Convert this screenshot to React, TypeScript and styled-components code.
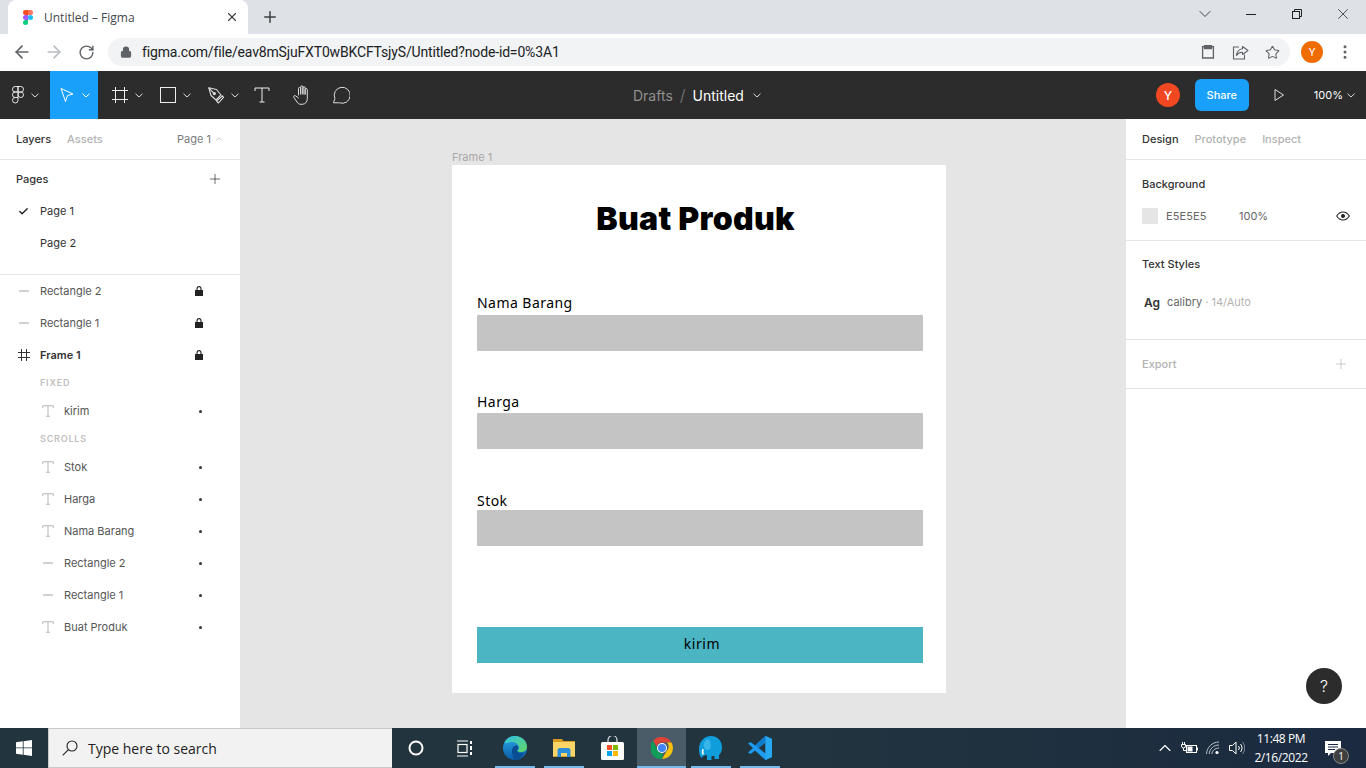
import React from "react";
import styled, {createGlobalStyle} from "styled-components";
import {ArrowLeft, ArrowRight, Check, ChevronDown, ChevronUp, Lock, MoreVertical, Plus, RotateCw, Star, X} from "lucide-react";

const GlobalStyle = createGlobalStyle`
  html, body {
    margin: 0;
    padding: 0;
    overflow: hidden;
    background: #fff;
  }
  * {
    box-sizing: border-box;
  }
`

const Screen = styled.div`
  width: 1366px;
  height: 768px;
  display: flex;
  flex-direction: column;
  overflow: hidden;
  font-family: Inter, sans-serif;
`

/* browser chrome */
const TabStrip = styled.div`
  height: 34px;
  flex: none;
  background: #dee1e6;
  display: flex;
  align-items: center;
  padding-left: 8px;
`

const Tab = styled.div`
  width: 240px;
  height: 34px;
  background: #fff;
  border-radius: 8px 8px 0 0;
  display: flex;
  align-items: center;
  padding: 0 9px 0 15px;
  font: 12px "Open Sans", sans-serif;
  color: #45494e;
`

const TabTitle = styled.span`
  flex: 1;
  margin-left: 11px;
`

const NewTab = styled.div`
  margin-left: 13px;
  display: flex;
  color: #3c4043;
`

const WindowControls = styled.div`
  margin-left: auto;
  display: flex;
  color: #202124;
`

const WindowButton = styled.div`
  width: 46px;
  height: 28px;
  margin-bottom: 6px;
  display: flex;
  align-items: center;
  justify-content: center;
`

const AddressRow = styled.div`
  height: 37px;
  flex: none;
  background: #fff;
  display: flex;
  align-items: center;
  padding: 0 0 1px 6px;
  color: #5f6368;
`

const NavButton = styled.div<{$dim?: boolean}>`
  width: 32px;
  height: 28px;
  display: flex;
  align-items: center;
  justify-content: center;
  color: ${p => p.$dim ? "#b9bcc0" : "#5f6368"};
`

const Omnibox = styled.div`
  width: 1182px;
  height: 28px;
  margin-left: 6px;
  border-radius: 14px;
  background: #f1f3f4;
  display: flex;
  align-items: center;
  padding: 0 2px 0 12px;
`

const Url = styled.span`
  margin-left: 10px;
  flex: 1;
  font: 14px Roboto, sans-serif;
  letter-spacing: -.16px;
  color: #202124;
`

const OmniIcon = styled.div`
  width: 32px;
  display: flex;
  justify-content: center;
`

const ChromeAvatar = styled.div`
  width: 22px;
  height: 22px;
  margin-left: 11px;
  border-radius: 50%;
  background: #ef6c00;
  color: #fff;
  font: 11px Roboto, sans-serif;
  display: flex;
  align-items: center;
  justify-content: center;
`

const Kebab = styled.div`
  margin-left: 13px;
  display: flex;
  color: #5f6368;
`

/* figma toolbar */
const ToolBar = styled.div`
  height: 48px;
  flex: none;
  background: #2c2c2c;
  display: flex;
  align-items: center;
  color: #fff;
`

const Tools = styled.div`
  flex: 0 0 633px;
  height: 48px;
  display: flex;
  align-items: center;
`

const Tool = styled.div<{$active?: boolean; $width: number; $inset?: number}>`
  width: ${p => p.$width}px;
  height: 48px;
  flex: none;
  padding-left: ${p => p.$inset ?? 0}px;
  display: flex;
  align-items: center;
  justify-content: center;
  gap: 7px;
  background: ${p => p.$active ? "#18a0fb" : "transparent"};
`

const Breadcrumb = styled.div`
  display: flex;
  align-items: center;
  font-size: 14px;
  color: #fff;
`

const Drafts = styled.span`
  color: #8f8f8f;
`

const Slash = styled.span`
  margin: 0 7px;
  color: #6a6a6a;
  font-size: 16px;
`

const ToolRight = styled.div`
  margin-left: auto;
  display: flex;
  align-items: center;
  height: 48px;
`

const UserDot = styled.div`
  width: 24px;
  height: 24px;
  border-radius: 50%;
  background: #f24822;
  display: flex;
  align-items: center;
  justify-content: center;
  font-size: 12px;
  font-weight: 500;
`

const ShareButton = styled.div`
  width: 54px;
  height: 32px;
  margin-left: 15px;
  border-radius: 6px;
  background: #18a0fb;
  display: flex;
  align-items: center;
  justify-content: center;
  font-size: 11px;
  font-weight: 500;
`

const PlayIcon = styled.div`
  margin-left: 22px;
  display: flex;
`

const Zoom = styled.div`
  margin: 0 11px 0 27px;
  display: flex;
  align-items: center;
  gap: 4px;
  font-size: 11px;
`

/* panels */
const Workspace = styled.div`
  flex: 1;
  min-height: 0;
  display: flex;
  position: relative;
`

const Panel = styled.aside`
  width: 240px;
  flex: none;
  background: #fff;
  font-size: 11px;
  color: #333;
`

const PanelTabs = styled.div`
  height: 41px;
  padding: 0 16px 1px;
  border-bottom: 1px solid #e5e5e5;
  display: flex;
  align-items: center;
  gap: 16px;
`

const PanelTab = styled.span<{$active?: boolean}>`
  font-weight: 500;
  color: ${p => p.$active ? "#333" : "#b3b3b3"};
`

const PageSwitch = styled.span`
  margin-left: auto;
  display: flex;
  align-items: center;
  gap: 3px;
  color: #7b7b7b;
`

const PagesBlock = styled.div`
  padding-bottom: 15px;
  border-bottom: 1px solid #e5e5e5;
`

const PagesHead = styled.div`
  height: 35px;
  padding: 3px 17px 0 16px;
  display: flex;
  align-items: center;
  justify-content: space-between;
  font-weight: 500;
`

const PageRow = styled.div`
  height: 32px;
  padding-left: 18px;
  display: flex;
  align-items: center;
`

const PageCheck = styled.div`
  width: 22px;
  display: flex;
`

const LayerRow = styled.div<{$nested?: boolean; $strong?: boolean}>`
  height: 32px;
  display: flex;
  align-items: center;
  padding-left: ${p => p.$nested ? 40 : 16}px;
  font-weight: ${p => p.$strong ? 600 : 400};
  color: ${p => p.$strong ? "#333" : "#555"};
`

const LayerIcon = styled.div`
  width: 16px;
  height: 16px;
  margin-right: 8px;
  flex: none;
  display: flex;
  align-items: center;
  justify-content: center;
`

const LayerName = styled.span`
  flex: 1;
`

const LayerTail = styled.div`
  width: 10px;
  margin-right: 36px;
  display: flex;
  justify-content: center;
`

const Dot = styled.i`
  width: 3px;
  height: 3px;
  margin-left: 2px;
  border-radius: 50%;
  background: #333;
`

const ScrollLabel = styled.div`
  height: 24px;
  padding: 0 0 2px 40px;
  display: flex;
  align-items: center;
  font-size: 9px;
  font-weight: 600;
  letter-spacing: .8px;
  color: #c0c0c0;
`

const PropSection = styled.section<{$height: number}>`
  height: ${p => p.$height}px;
  border-bottom: 1px solid #e5e5e5;
  padding: 0 16px;
`

const PropTitle = styled.div<{$muted?: boolean; $height: number}>`
  height: ${p => p.$height}px;
  display: flex;
  align-items: center;
  justify-content: space-between;
  font-weight: 500;
  color: ${p => p.$muted ? "#b3b3b3" : "#333"};
`

const FillRow = styled.div`
  display: flex;
  align-items: center;
  height: 16px;
  color: #666;
`

const Swatch = styled.div`
  width: 16px;
  height: 16px;
  background: #e5e5e5;
`

const HexValue = styled.span`
  margin-left: 8px;
  width: 73px;
  letter-spacing: .1px;
`

const Opacity = styled.span`
  flex: 1;
`

const StyleRow = styled.div`
  display: flex;
  align-items: center;
  height: 20px;
  margin-top: 5px;
`

const Ag = styled.span`
  width: 25px;
  padding-left: 2px;
  font-size: 12px;
  font-weight: 600;
  color: #333;
`

const StyleName = styled.span`
  color: #666;
`

const StyleMeta = styled.span`
  color: #b3b3b3;
`

const ExportPlus = styled.span`
  margin-right: 1px;
  display: flex;
`

/* canvas */
const Canvas = styled.main`
  flex: 1;
  position: relative;
  background: #e5e5e5;
`

const FrameLabel = styled.div`
  position: absolute;
  left: 212px;
  top: 31px;
  font-size: 11px;
  color: #a8a8a8;
`

const Frame = styled.div`
  position: absolute;
  left: 212px;
  top: 46px;
  width: 494px;
  height: 528px;
  background: #fff;
  padding: 34px 23px 0 25px;
`

const Heading = styled.h1`
  margin: 0 0 0 -9px;
  height: 40px;
  text-align: center;
  font: 900 32px/40px Inter, sans-serif;
  letter-spacing: .3px;
  color: #000;
`

const Field = styled.div<{$top: number}>`
  margin-top: ${p => p.$top}px;
`

const FieldLabel = styled.div<{$gap: number}>`
  height: 14px;
  margin-bottom: ${p => p.$gap}px;
  font: 14px/14px "Noto Sans", sans-serif;
  letter-spacing: .45px;
  color: #000;
`

const InputBar = styled.div`
  height: 36px;
  background: #c4c4c4;
`

const SendButton = styled.div`
  margin-top: 81px;
  height: 36px;
  padding: 0 0 3px 4px;
  background: #4bb5c3;
  display: flex;
  align-items: center;
  justify-content: center;
  font: 14px "Noto Sans", sans-serif;
  letter-spacing: .55px;
  color: #000;
`

const HelpButton = styled.div`
  position: absolute;
  right: 24px;
  bottom: 24px;
  width: 36px;
  height: 36px;
  border-radius: 50%;
  background: #2c2c2c;
  color: #fff;
  display: flex;
  align-items: center;
  justify-content: center;
  font-size: 16px;
  font-weight: 300;
`

/* windows taskbar */
const TaskBar = styled.footer`
  height: 40px;
  flex: none;
  background: linear-gradient(90deg, #22353f 0%, #22353f 55%, #1b2a40 100%);
  display: flex;
  align-items: center;
  color: #fff;
`

const StartButton = styled.div`
  width: 48px;
  display: flex;
  justify-content: center;
`

const SearchBox = styled.div`
  width: 344px;
  height: 40px;
  background: #f2f2f2;
  border: 1px solid #c9c9c9;
  border-width: 1px 0 1px 1px;
  display: flex;
  align-items: center;
  padding-left: 13px;
  font: 14px "Open Sans", sans-serif;
  color: #222;
`

const SearchText = styled.span`
  margin-left: 10px;
`

const TaskSlot = styled.div<{$open?: boolean; $current?: boolean; $width?: number}>`
  width: ${p => p.$width ?? 49}px;
  height: 40px;
  display: flex;
  align-items: center;
  justify-content: center;
  background: ${p => p.$current ? "#4a5c68" : "transparent"};
  box-shadow: ${p => p.$open && p.$current ? "inset 0 -2px 0 #76b9ed" : "none"};
  ${p => p.$open && !p.$current ? `
    background: linear-gradient(#76b9ed, #76b9ed) center bottom / 40px 2px no-repeat;
  ` : ""}
`

const Tray = styled.div`
  margin-left: auto;
  display: flex;
  align-items: center;
`

const TrayIcon = styled.div<{$width: number}>`
  width: ${p => p.$width}px;
  display: flex;
  justify-content: center;
`

const Clock = styled.div`
  width: 64px;
  text-align: center;
  white-space: nowrap;
  font: 12px/19px "Open Sans", sans-serif;
  letter-spacing: -.4px;
  color: #fff;
`

const Notify = styled.div`
  width: 41px;
  margin-left: 12px;
  position: relative;
  display: flex;
`

const NotifyBadge = styled.span`
  position: absolute;
  left: 8px;
  top: 7px;
  width: 16px;
  height: 16px;
  border-radius: 50%;
  background: #3f3f3f;
  border: 1px solid #8a8a8a;
  display: flex;
  align-items: center;
  justify-content: center;
  font: 10px "Open Sans", sans-serif;
  color: #fff;
`

const FigmaFavicon = () => (
  <svg width="10" height="15" viewBox="0 0 10 15">
    <path d="M5 0H2.5a2.5 2.5 0 0 0 0 5H5z" fill="#f24e1e"/>
    <path d="M5 0h2.5a2.5 2.5 0 0 1 0 5H5z" fill="#ff7262"/>
    <path d="M5 5H2.5a2.5 2.5 0 0 0 0 5H5z" fill="#a259ff"/>
    <circle cx="7.5" cy="7.5" r="2.5" fill="#1abcfe"/>
    <path d="M5 10H2.5A2.5 2.5 0 1 0 5 12.5z" fill="#0acf83"/>
  </svg>
)

const FigmaMark = () => (
  <svg width="12" height="18" viewBox="0 0 12 18" fill="none" stroke="#e6e6e6" strokeWidth="1">
    <path d="M6 .5H3.2a2.75 2.75 0 0 0 0 5.5H6zM6 .5h2.8a2.75 2.75 0 0 1 0 5.5H6zM6 6H3.2a2.75 2.75 0 0 0 0 5.5H6z"/>
    <circle cx="8.75" cy="8.75" r="2.75"/>
    <path d="M6 11.5H3.2A2.75 2.75 0 1 0 6 14.25z"/>
  </svg>
)

const Caret = ({color = "#d9d9d9"}: {color?: string}) => (
  <svg width="8" height="5" viewBox="0 0 8 5" fill="none" stroke={color} strokeWidth="1">
    <path d="M.5.7 4 4 7.5.7"/>
  </svg>
)

const MoveIcon = () => (
  <svg width="16" height="16" viewBox="0 0 16 16" fill="none" stroke="#fff" strokeWidth="1">
    <path d="M2 1.5 14 7 8.5 8.5 6.5 14.5z" strokeLinejoin="round"/>
  </svg>
)

const FrameIcon = () => (
  <svg width="16" height="16" viewBox="0 0 16 16" fill="none" stroke="#eee" strokeWidth="1">
    <path d="M3.5 0v16M12.5 0v16M0 3.500h16M0 12.500h16"/>
  </svg>
)

const RectIcon = () => (
  <svg width="16" height="16" viewBox="0 0 16 16" fill="none" stroke="#eee" strokeWidth="1">
    <rect x=".5" y=".5" width="15" height="15"/>
  </svg>
)

const PenIcon = () => (
  <svg width="16" height="17" viewBox="0 0 16 17" fill="none" stroke="#ddd" strokeWidth="1.1" strokeLinejoin="round">
    <path d="M.8.8 8.500 2.500 13 8 8 13 3 8.500z"/>
    <circle cx="6.300" cy="6.600" r="1.100" fill="#ddd"/>
    <path d="M.8.8 5.500 5.800M8.500 14 14.500 8.800l1 1.500L10.500 16z"/>
  </svg>
)

const TextToolIcon = ({size = 16, color = "#eee"}: {size?: number; color?: string}) => (
  <svg width={size} height={size} viewBox="0 0 16 16" fill="none" stroke={color} strokeWidth={size < 16 ? 1.1 : 1}>
    <path d="M1 4V1h14v3M8 1v14M5.5 15h5"/>
  </svg>
)

const HandIcon = () => (
  <svg width="18" height="20" viewBox="0 0 18 20" fill="none" stroke="#ddd" strokeWidth="1" strokeLinejoin="round" strokeLinecap="round">
    <path d="M5.500 10V3.600a1.100 1.100 0 0 1 2.200 0V9M7.700 9V2a1.100 1.100 0 0 1 2.200 0V9M9.900 9V2.800a1.100 1.100 0 0 1 2.200 0V9.200M12.100 9.200V4.600a1.100 1.100 0 0 1 2.200 0v9c0 3.300-2 5.700-5 5.700H8c-2 0-3-.8-4-2.300L.8 12.300c-.8-1.100.8-2.400 1.900-1.400L5.500 13"/>
  </svg>
)

const CommentIcon = () => (
  <svg width="18" height="18" viewBox="0 0 18 18" fill="none" stroke="#ddd" strokeWidth="1">
    <path d="M1.500 16.800h6A8 8 0 1 0 2.900 12.500z" strokeLinejoin="round"/>
  </svg>
)

const ClipboardIcon = () => (
  <svg width="14" height="14" viewBox="0 0 14 14" fill="none" stroke="#5f6368" strokeWidth="1.300">
    <path d="M3.500 1.700H1.600v11.300h10.800V1.700h-1.900"/>
    <path d="M3.500 .7h7v2.800h-7z" fill="#5f6368"/>
  </svg>
)

const ShareArrow = () => (
  <svg width="17" height="15" viewBox="0 0 17 15" fill="none" stroke="#5f6368" strokeWidth="1.100">
    <path d="M7 2H1.500v12h11V9.500"/>
    <path d="M10.500 1.500 16 5.500 10.500 9.500V7.300C8 7.200 6 8.300 4.500 10.500 5 6.800 7.300 4.200 10.500 3.800z" strokeLinejoin="round"/>
  </svg>
)

const RestoreIcon = () => (
  <svg width="10" height="10" viewBox="0 0 10 10" fill="none" stroke="#202124" strokeWidth="1">
    <rect x=".5" y="2.500" width="7" height="7"/>
    <path d="M2.500 2.500V.5h7v7H7.500"/>
  </svg>
)

const EyeIcon = () => (
  <svg width="14" height="10" viewBox="0 0 14 10" fill="none" stroke="#222" strokeWidth="1.100">
    <path d="M.7 5C2.300 2.300 4.400 1 7 1s4.700 1.300 6.300 4C11.700 7.700 9.600 9 7 9S2.300 7.700.7 5z"/>
    <circle cx="7" cy="5" r="2" fill="#222" stroke="none"/>
  </svg>
)

const LineIcon = () => (
  <svg width="10" height="2" viewBox="0 0 10 2">
    <rect width="10" height="1.200" y=".4" fill="#b3b3b3"/>
  </svg>
)

const HashIcon = () => (
  <svg width="12" height="12" viewBox="0 0 12 12" fill="none" stroke="#333" strokeWidth="1">
    <path d="M3.500 0v12M8.500 0v12M0 3.500h12M0 8.500h12"/>
  </svg>
)

const MiniLock = () => (
  <svg width="8" height="10" viewBox="0 0 8 10">
    <path d="M1.500 4V2.600a2.500 2.500 0 0 1 5 0V4H8v6H0V4zM2.600 4h2.800V2.600a1.400 1.400 0 0 0-2.800 0z" fill="#222"/>
  </svg>
)

const WindowsLogo = () => (
  <svg width="16" height="16" viewBox="0 0 16 16" fill="#fff">
    <path d="M0 2.300 6.800 1.300v6.200H0zM7.600 1.200 16 0v7.500H7.600zM0 8.300h6.800v6.400L0 13.700zM7.600 8.300H16V16l-8.400-1.200z"/>
  </svg>
)

const SearchGlass = () => (
  <svg width="16" height="16" viewBox="0 0 16 16" fill="none" stroke="#222" strokeWidth="1.100">
    <circle cx="10" cy="6" r="5"/>
    <path d="M6.400 9.600.7 15.300"/>
  </svg>
)

const TaskViewIcon = () => (
  <svg width="16" height="17" viewBox="0 0 16 17" fill="none" stroke="#fff" strokeWidth="1.200">
    <path d="M0 1h11M0 16h11"/>
    <rect x="1" y="4.500" width="9" height="8"/>
    <path d="M14 1v3M14 6v4M14 12v3" strokeWidth="2"/>
  </svg>
)

const EdgeIcon = () => (
  <svg width="24" height="24" viewBox="0 0 24 24">
    <defs>
      <linearGradient id="edgeBody" x1="0" y1="0" x2="0" y2="1">
        <stop offset="0" stopColor="#2aa9e6"/>
        <stop offset="1" stopColor="#0b5aa8"/>
      </linearGradient>
      <linearGradient id="edgeTop" x1="0" y1="0" x2="1" y2="1">
        <stop offset="0" stopColor="#2fc3e8"/>
        <stop offset="1" stopColor="#63d85f"/>
      </linearGradient>
    </defs>
    <circle cx="12" cy="12" r="12" fill="url(#edgeBody)"/>
    <path d="M1.500 6.500C3.500 2.500 7.500 0 12 0c7 0 12 5 12 11 0 3.500-3 5-6 5-2 0-3.500-.7-4-1.500 1.500-.5 2.500-1.800 2-3.500C15 7 10.500 5 6 6.500 4.300 7 2.800 8 1.500 6.500z" fill="url(#edgeTop)"/>
    <path d="M9 15c0-4 3-6.500 5.500-5.200 1.200 1 .7 3.700-.5 4.700.5 2.500 4 3.800 7.500 1.800-2 4-5 7.700-9 7.700-2.500-2-3.500-5.500-3.500-9z" fill="#0a4d92"/>
  </svg>
)

const ExplorerIcon = () => (
  <svg width="22" height="18" viewBox="0 0 22 18">
    <path d="M0 0h9l1.500 2H22v4H0z" fill="#d99a22"/>
    <rect y="3" width="22" height="15" fill="#fbd666"/>
    <rect y="17" width="22" height="1" fill="#c9a13a"/>
    <path d="M4.500 18v-7.500L6 9h10l1.500 1.500V18H14v-4H8v4z" fill="#2a8fd8"/>
  </svg>
)

const StoreIcon = () => (
  <svg width="23" height="24" viewBox="0 0 23 24">
    <path d="M7 7V4a4.500 4.500 0 0 1 9 0v3" fill="none" stroke="#dfe3e6" strokeWidth="1.200"/>
    <rect y="6" width="23" height="18" rx="1.500" fill="#fff"/>
    <rect x="6" y="9" width="5" height="5" fill="#f25022"/>
    <rect x="12" y="9" width="5" height="5" fill="#7fba00"/>
    <rect x="6" y="15" width="5" height="5" fill="#00a4ef"/>
    <rect x="12" y="15" width="5" height="5" fill="#ffb900"/>
  </svg>
)

const ChromeIcon = () => (
  <svg width="22" height="22" viewBox="0 0 22 22">
    <path d="M11 0a11 11 0 0 1 9.500 5.500H11a5.500 5.500 0 0 0-5.300 4L2 3.800A11 11 0 0 1 11 0z" fill="#db4437"/>
    <path d="M20.500 5.500A11 11 0 0 1 11 22l4.800-8.200a5.500 5.500 0 0 0 0-8.300z" fill="#f4c20d"/>
    <path d="M11 22A11 11 0 0 1 2 3.800L6.500 13a5.500 5.500 0 0 0 5.700 3.400z" fill="#0f9d58"/>
    <circle cx="11" cy="11" r="5" fill="#fff"/>
    <circle cx="11" cy="11" r="4" fill="#4285f4"/>
  </svg>
)

const ElephantIcon = () => (
  <svg width="23" height="24" viewBox="0 0 23 24">
    <path d="M12 0c6 0 11 4.500 11 11 0 4-1 6-3 8v4h-4.500v-3h-3v4H8v-5C5 19 4 20 2.500 22 .8 20.500 0 17 0 13 0 6 5 0 12 0z" fill="#0f9ddc"/>
    <path d="M9 3c-3 1-5 4-4 8 1 3 4 4 6 2 1.500-3 1-8-2-10z" fill="#38b6ea"/>
    <path d="M3.500 13c-1 2-1 4 0 6l1.500-1c-.8-1.500-.8-3 0-4.500z" fill="#fff"/>
  </svg>
)

const VsCodeIcon = () => (
  <svg width="24" height="24" viewBox="0 0 24 24">
    <path d="M17.500 0 24 3v18l-6.500 3L7 14.500 2.500 18 0 16.500 5 12 0 7.500 2.500 6 7 9.500z" fill="#1f9cf0"/>
    <path d="M17.500 6.500 10.500 12l7 5.500z" fill="#22353f"/>
    <path d="M17.500 0 24 3v18l-6.500 3z" fill="#27a9f2"/>
    <path d="M17.500 0v6.500L10.500 12 7 9.500z" fill="#0f7ccb"/>
  </svg>
)

const BatteryIcon = () => (
  <svg width="17" height="12" viewBox="0 0 17 12" fill="none" stroke="#fff" strokeWidth="1">
    <rect x="5.500" y="3.500" width="10" height="7"/>
    <rect x="6.500" y="4.500" width="5" height="5" fill="#fff" stroke="none"/>
    <rect x="15.500" y="5.500" width="1.500" height="3" fill="#fff" stroke="none"/>
    <path d="M1.500 0v2M3.500 0v2M.5 2.500h4v1.500a2 2 0 0 1-4 0zM2.500 6v2.500h3"/>
  </svg>
)

const WifiIcon = () => (
  <svg width="14" height="14" viewBox="0 0 14 14" fill="none" stroke="#c8d0d6" strokeWidth=".9">
    <path d="M.5 13C.8 6.500 6 1 13 1M3.200 13C3.500 8 7.500 4 13 4M5.800 13c.3-3 3-6 7.200-6"/>
    <circle cx="11" cy="11.500" r="1.600" fill="#fff" stroke="none"/>
  </svg>
)

const VolumeIcon = () => (
  <svg width="16" height="14" viewBox="0 0 16 14" fill="none" stroke="#fff" strokeWidth="1">
    <path d="M.5 4.500h3L7 1v12L3.500 9.500h-3zM9.500 5a3 3 0 0 1 0 4M11.500 3a6 6 0 0 1 0 8"/>
    <path d="M13.500 1a9 9 0 0 1 0 12" stroke="#7d8a95"/>
  </svg>
)

const NotifyIcon = () => (
  <svg width="16" height="15" viewBox="0 0 16 15">
    <path d="M0 0h16v12H6l-3 3v-3H0z" fill="#fff"/>
    <path d="M3 3.500h10M3 6h10M3 8.500h7" stroke="#1b2a40" strokeWidth="1"/>
  </svg>
)

const pageRows = ["Page 1", "Page 2"];

const scrollLayers: {name: string; kind: "text" | "line"}[] = [
  {name: "Stok", kind: "text"},
  {name: "Harga", kind: "text"},
  {name: "Nama Barang", kind: "text"},
  {name: "Rectangle 2", kind: "line"},
  {name: "Rectangle 1", kind: "line"},
  {name: "Buat Produk", kind: "text"},
];

function NestedLayer({name, kind}: {name: string; kind: "text" | "line"}) {
  return (
    <LayerRow $nested>
      <LayerIcon>
        {kind === "text" ? <TextToolIcon size={12} color="#a8a8a8"/> : <LineIcon/>}
      </LayerIcon>
      <LayerName>{name}</LayerName>
      <LayerTail><Dot/></LayerTail>
    </LayerRow>
  );
}

function App() {
  return (
    <Screen>
      <GlobalStyle/>
      <TabStrip>
        <Tab>
          <FigmaFavicon/>
          <TabTitle>Untitled – Figma</TabTitle>
          <X size={14} strokeWidth={2} color="#3c4043"/>
        </Tab>
        <NewTab><Plus size={18} strokeWidth={2}/></NewTab>
        <WindowControls>
          <WindowButton><ChevronDown size={20} strokeWidth={1}/></WindowButton>
          <WindowButton><svg width="10" height="1"><rect width="10" height="1" fill="#202124"/></svg></WindowButton>
          <WindowButton><RestoreIcon/></WindowButton>
          <WindowButton><X size={18} strokeWidth={1}/></WindowButton>
        </WindowControls>
      </TabStrip>

      <AddressRow>
        <NavButton><ArrowLeft size={20} strokeWidth={2}/></NavButton>
        <NavButton $dim><ArrowRight size={20} strokeWidth={2}/></NavButton>
        <NavButton><RotateCw size={17} strokeWidth={2}/></NavButton>
        <Omnibox>
          <Lock size={12} strokeWidth={2.5} fill="#5f6368"/>
          <Url>figma.com/file/eav8mSjuFXT0wBKCFTsjyS/Untitled?node-id=0%3A1</Url>
          <OmniIcon><ClipboardIcon/></OmniIcon>
          <OmniIcon><ShareArrow/></OmniIcon>
          <OmniIcon><Star size={15} strokeWidth={1.7}/></OmniIcon>
        </Omnibox>
        <ChromeAvatar>Y</ChromeAvatar>
        <Kebab><MoreVertical size={18} strokeWidth={2}/></Kebab>
      </AddressRow>

      <ToolBar>
        <Tools>
          <Tool $width={50}><FigmaMark/><Caret/></Tool>
          <Tool $active $width={48}><MoveIcon/><Caret color="#fff"/></Tool>
          <Tool $width={53} $inset={5}><FrameIcon/><Caret/></Tool>
          <Tool $width={48}><RectIcon/><Caret/></Tool>
          <Tool $width={48}><PenIcon/><Caret/></Tool>
          <Tool $width={30}><TextToolIcon/></Tool>
          <Tool $width={50}><HandIcon/></Tool>
          <Tool $width={28}><CommentIcon/></Tool>
        </Tools>
        <Breadcrumb>
          <Drafts>Drafts</Drafts>
          <Slash>/</Slash>
          <span>Untitled</span>
          <Tool $width={26}><Caret/></Tool>
        </Breadcrumb>
        <ToolRight>
          <UserDot>Y</UserDot>
          <ShareButton>Share</ShareButton>
          <PlayIcon>
            <svg width="16" height="16" viewBox="0 0 16 16" fill="none" stroke="#ddd"><path d="M4 2.500 12.500 8 4 13.500z"/></svg>
          </PlayIcon>
          <Zoom>100%<Caret/></Zoom>
        </ToolRight>
      </ToolBar>

      <Workspace>
        <Panel>
          <PanelTabs>
            <PanelTab $active>Layers</PanelTab>
            <PanelTab>Assets</PanelTab>
            <PageSwitch>Page 1<ChevronUp size={10} strokeWidth={1} color="#777"/></PageSwitch>
          </PanelTabs>
          <PagesBlock>
            <PagesHead>Pages<Plus size={16} strokeWidth={1} color="#222"/></PagesHead>
            {pageRows.map((page, index) => (
              <PageRow key={page}>
                <PageCheck>{index === 0 && <Check size={11} strokeWidth={3} color="#222"/>}</PageCheck>
                {page}
              </PageRow>
            ))}
          </PagesBlock>
          <LayerRow>
            <LayerIcon><LineIcon/></LayerIcon>
            <LayerName>Rectangle 2</LayerName>
            <LayerTail><MiniLock/></LayerTail>
          </LayerRow>
          <LayerRow>
            <LayerIcon><LineIcon/></LayerIcon>
            <LayerName>Rectangle 1</LayerName>
            <LayerTail><MiniLock/></LayerTail>
          </LayerRow>
          <LayerRow $strong>
            <LayerIcon><HashIcon/></LayerIcon>
            <LayerName>Frame 1</LayerName>
            <LayerTail><MiniLock/></LayerTail>
          </LayerRow>
          <ScrollLabel>FIXED</ScrollLabel>
          <NestedLayer name="kirim" kind="text"/>
          <ScrollLabel>SCROLLS</ScrollLabel>
          {scrollLayers.map(layer => <NestedLayer key={layer.name} {...layer}/>)}
        </Panel>

        <Canvas>
          <FrameLabel>Frame 1</FrameLabel>
          <Frame>
            <Heading>Buat Produk</Heading>
            <Field $top={57}>
              <FieldLabel $gap={5}>Nama Barang</FieldLabel>
              <InputBar/>
            </Field>
            <Field $top={44}>
              <FieldLabel $gap={4}>Harga</FieldLabel>
              <InputBar/>
            </Field>
            <Field $top={45}>
              <FieldLabel $gap={2}>Stok</FieldLabel>
              <InputBar/>
            </Field>
            <SendButton>kirim</SendButton>
          </Frame>
        </Canvas>

        <Panel>
          <PanelTabs>
            <PanelTab $active>Design</PanelTab>
            <PanelTab>Prototype</PanelTab>
            <PanelTab>Inspect</PanelTab>
          </PanelTabs>
          <PropSection $height={81}>
            <PropTitle $height={48}>Background</PropTitle>
            <FillRow>
              <Swatch/>
              <HexValue>E5E5E5</HexValue>
              <Opacity>100%</Opacity>
              <EyeIcon/>
            </FillRow>
          </PropSection>
          <PropSection $height={99}>
            <PropTitle $height={46}>Text Styles</PropTitle>
            <StyleRow>
              <Ag>Ag</Ag>
              <StyleName>calibry</StyleName>
              <StyleMeta>&nbsp;· 14/Auto</StyleMeta>
            </StyleRow>
          </PropSection>
          <PropSection $height={49}>
            <PropTitle $muted $height={48}>Export<ExportPlus><Plus size={16} strokeWidth={1} color="#b3b3b3"/></ExportPlus></PropTitle>
          </PropSection>
        </Panel>
        <HelpButton>?</HelpButton>
      </Workspace>

      <TaskBar>
        <StartButton><WindowsLogo/></StartButton>
        <SearchBox><SearchGlass/><SearchText>Type here to search</SearchText></SearchBox>
        <TaskSlot $width={48}>
          <svg width="16" height="16" viewBox="0 0 16 16" fill="none" stroke="#fff" strokeWidth="2"><circle cx="8" cy="8" r="6.500"/></svg>
        </TaskSlot>
        <TaskSlot $width={50}><TaskViewIcon/></TaskSlot>
        <TaskSlot $open><EdgeIcon/></TaskSlot>
        <TaskSlot $open><ExplorerIcon/></TaskSlot>
        <TaskSlot><StoreIcon/></TaskSlot>
        <TaskSlot $open $current><ChromeIcon/></TaskSlot>
        <TaskSlot $open><ElephantIcon/></TaskSlot>
        <TaskSlot $open><VsCodeIcon/></TaskSlot>
        <Tray>
          <TrayIcon $width={24}><ChevronUp size={20} strokeWidth={1.3}/></TrayIcon>
          <TrayIcon $width={24}><BatteryIcon/></TrayIcon>
          <TrayIcon $width={24}><WifiIcon/></TrayIcon>
          <TrayIcon $width={24}><VolumeIcon/></TrayIcon>
          <Clock>11:48 PM<br/>2/16/2022</Clock>
          <Notify>
            <NotifyIcon/>
            <NotifyBadge>1</NotifyBadge>
          </Notify>
        </Tray>
      </TaskBar>
    </Screen>
  );
}

export default App;
